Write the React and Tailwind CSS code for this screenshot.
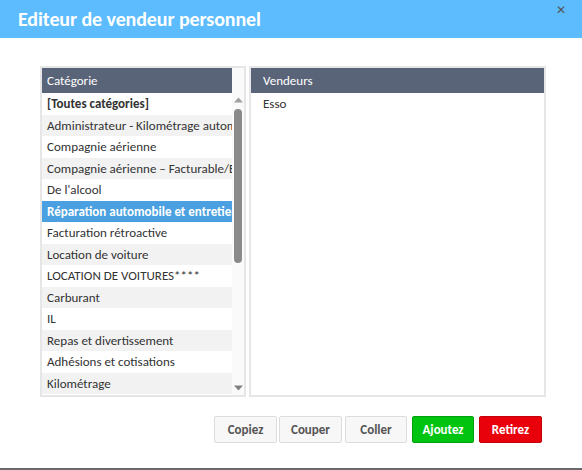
import React from "react";

const cats = [
  { t: "[Toutes catégories]", bold: true },
  { t: "Administrateur - Kilométrage autom" },
  { t: "Compagnie aérienne" },
  { t: "Compagnie aérienne – Facturable/E" },
  { t: "De l'alcool" },
  { t: "Réparation automobile et entretien", sel: true },
  { t: "Facturation rétroactive" },
  { t: "Location de voiture" },
  { t: "LOCATION DE VOITURES****" },
  { t: "Carburant" },
  { t: "IL" },
  { t: "Repas et divertissement" },
  { t: "Adhésions et cotisations" },
  { t: "Kilométrage" },
];

const font = { fontFamily: "Carlito, Lato, 'Open Sans', sans-serif" };

export default function App() {
  return (
    <div className="w-[582px] h-[470px] bg-white relative overflow-hidden" style={font}>
      <div className="h-[38px] bg-[#5cbcfe] flex items-center pl-[18px] relative">
        <span className="text-white font-bold text-[20px] leading-none tracking-[-0.1px]">Editeur de vendeur personnel</span>
        <span className="absolute right-[16px] top-[4px] text-[#555] text-[12px] leading-none">✕</span>
      </div>
      <div className="flex pl-[40px] pt-[28px] gap-[3px]">
        <div className="w-[206px] h-[331px] border-2 border-[#e6e6e6] flex">
          <div className="w-[190px] flex flex-col">
            <div className="h-[25px] shrink-0 bg-[#5a6478] text-white text-[13px] flex items-center pl-[5px]">Catégorie</div>
            {cats.map((c, i) => (
              <div
                key={i}
                className={
                  "h-[21.5px] shrink-0 flex items-center pl-[5px] text-[13px] whitespace-nowrap overflow-hidden " +
                  (c.sel
                    ? "bg-[#4aa0e0] text-white font-bold"
                    : i % 2 === 1
                    ? "bg-[#f2f2f2] text-[#333]"
                    : "bg-white text-[#333]") +
                  (c.bold ? " font-bold" : "")
                }
              >
                {c.t}
              </div>
            ))}
          </div>
          <div className="flex-1 bg-[#fafafa] flex flex-col items-center pt-[29px] pb-[4px]">
            <svg width="9" height="6" viewBox="0 0 9 6"><path d="M0 5.5 L4.5 0.5 L9 5.5Z" fill="#a0a0a0" /></svg>
            <div className="w-[8px] h-[154px] bg-[#8a8a8a] rounded-full mt-[6px]" />
            <div className="flex-1" />
            <svg width="9" height="6" viewBox="0 0 9 6"><path d="M0 0.5 L4.5 5.5 L9 0.5Z" fill="#808080" /></svg>
          </div>
        </div>
        <div className="w-[297px] h-[331px] border-2 border-[#e6e6e6] flex flex-col">
          <div className="h-[25px] bg-[#5a6478] text-white text-[13px] flex items-center pl-[12px]">Vendeurs</div>
          <div className="h-[21.5px] flex items-center pl-[12px] text-[13px] text-[#333]">Esso</div>
        </div>
      </div>
      <div className="flex pl-[214px] pt-[19px]">
        <button className="w-[63px] h-[27px] bg-[#f7f7f7] border border-[#dcdcdc] rounded-[2px] text-[#555] font-bold text-[13px]">Copiez</button>
        <button className="w-[63px] h-[27px] ml-[2px] bg-[#f7f7f7] border border-[#dcdcdc] rounded-[2px] text-[#555] font-bold text-[13px]">Couper</button>
        <button className="w-[62px] h-[27px] ml-[3px] bg-[#f7f7f7] border border-[#dcdcdc] rounded-[2px] text-[#555] font-bold text-[13px]">Coller</button>
        <button className="w-[62px] h-[27px] ml-[5px] bg-[#00c410] border border-[#00a00c] rounded-[2px] text-white font-bold text-[13px]">Ajoutez</button>
        <button className="w-[63px] h-[27px] ml-[5px] bg-[#e8000b] border border-[#c40008] rounded-[2px] text-white font-bold text-[13px]">Retirez</button>
      </div>
      <div className="absolute left-0 right-0 bottom-0 h-[2px] bg-[#6a6a6a]" />
    </div>
  );
}
